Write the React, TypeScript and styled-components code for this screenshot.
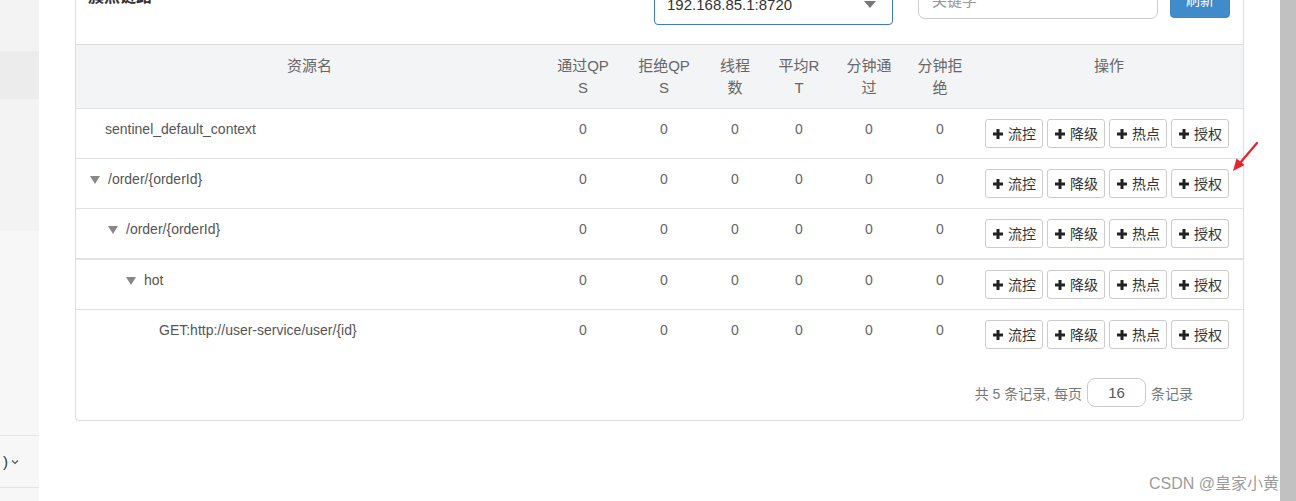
import React from 'react';
import styled, { createGlobalStyle } from 'styled-components';

const GlobalStyle = createGlobalStyle`
  html, body {
    margin: 0;
    padding: 0;
    background: #fff;
  }
  body {
    font-family: "Liberation Sans", "Noto Sans CJK SC", sans-serif;
    overflow: hidden;
  }
  * {
    box-sizing: border-box;
  }
`;

const Page = styled.div`
  position: relative;
  display: flex;
  width: 1296px;
  height: 501px;
  overflow: hidden;
`;

const Sidebar = styled.div`
  width: 39px;
  flex-shrink: 0;
  display: flex;
  flex-direction: column;
  background: #f7f7f7;
`;

const SubMenu = styled.div`
  height: 231px;
  display: flex;
  flex-direction: column;
  background: #f3f3f3;
`;

const MenuItem = styled.div<{ $h: number; $active?: boolean; $bordered?: boolean }>`
  height: ${(p) => p.$h}px;
  flex-shrink: 0;
  display: flex;
  align-items: center;
  background: ${(p) => (p.$active ? '#ececec' : 'transparent')};
  border-top: ${(p) => (p.$bordered ? '1px solid #e4e4e4' : 'none')};
  border-bottom: ${(p) => (p.$bordered ? '1px solid #e4e4e4' : 'none')};
`;

const MenuLabel = styled.span`
  display: flex;
  align-items: center;
  gap: 3px;
  padding-left: 3px;
  font-size: 15px;
  color: #333;
`;

const Main = styled.div`
  flex: 1;
  padding: 0 36px;
`;

const Card = styled.div`
  margin-top: -30px;
  border: 1px solid #ddd;
  border-radius: 4px;
  background: #fff;
`;

const Toolbar = styled.div`
  display: flex;
  align-items: flex-start;
  height: 74px;
  padding: 0 13px 0 12px;
  border-bottom: 1px solid #ddd;
`;

const Title = styled.div`
  flex: 1;
  margin-top: 15px;
  font-size: 16px;
  line-height: 22px;
  font-weight: bold;
  color: #333;
`;

const Select = styled.div`
  width: 239px;
  height: 42px;
  margin-top: 12px;
  margin-right: 25px;
  padding: 0 16px 0 12px;
  display: flex;
  align-items: center;
  justify-content: space-between;
  border: 1px solid #3d7cbd;
  border-radius: 4px;
  font-size: 15px;
  color: #333;
`;

const Caret = styled.span`
  width: 0;
  height: 0;
  border-left: 6px solid transparent;
  border-right: 6px solid transparent;
  border-top: 7px solid #777;
`;

const SearchInput = styled.input`
  width: 240px;
  height: 38px;
  margin-top: 10px;
  margin-right: 12px;
  padding: 0 13px;
  border: 1px solid #ccc;
  border-radius: 7px;
  font-family: inherit;
  font-size: 15px;
  color: #555;
  outline: none;

  &::placeholder {
    color: #999;
  }
`;

const RefreshButton = styled.button`
  width: 60px;
  height: 38px;
  margin-top: 9px;
  border: 1px solid #3f86c4;
  border-radius: 4px;
  background: #428bca;
  color: #fff;
  font-family: inherit;
  font-size: 14px;
`;

const Table = styled.table`
  width: 1167px;
  border-collapse: collapse;
  table-layout: fixed;
`;

const Th = styled.th`
  padding: 10px 4px 9px;
  background: #f3f4f5;
  color: #666;
  font-size: 15px;
  font-weight: normal;
  line-height: 22px;
  text-align: center;
  vertical-align: top;
  white-space: pre-line;
`;

const Td = styled.td<{ $thick?: boolean }>`
  padding: 10px 8px;
  border-top: ${(p) => (p.$thick ? 2 : 1)}px solid #e2e2e2;
  color: #666;
  font-size: 14px;
  line-height: 20px;
  text-align: center;
  vertical-align: top;
`;

const NameCell = styled(Td)<{ $indent: number }>`
  padding-left: ${(p) => p.$indent}px;
  text-align: left;
  color: #555;
`;

const Toggle = styled.span`
  display: inline-block;
  width: 0;
  height: 0;
  margin-right: 8px;
  vertical-align: middle;
  border-left: 5.5px solid transparent;
  border-right: 5.5px solid transparent;
  border-top: 8px solid #888;
`;

const OpGroup = styled.div`
  display: inline-flex;
  gap: 4px;
  margin-left: -4px;
`;

const OpButton = styled.button`
  height: 29px;
  padding: 0 6px 0 7px;
  display: inline-flex;
  align-items: center;
  gap: 5px;
  border: 1px solid #ccc;
  border-radius: 3px;
  background: #fff;
  color: #333;
  font-family: inherit;
  font-size: 14px;
  line-height: 1;
`;

const Pagination = styled.div`
  display: flex;
  justify-content: flex-end;
  align-items: center;
  padding: 19px 50px 13px 0;
  font-size: 14px;
  color: #777;
`;

const PageSize = styled.input`
  width: 59px;
  height: 29px;
  margin: 0 5px;
  border: 1px solid #ccc;
  border-radius: 8px;
  text-align: center;
  font-family: inherit;
  font-size: 15px;
  color: #555;
  outline: none;
`;

const Scrollbar = styled.div`
  width: 16px;
  flex-shrink: 0;
  background: #c1c1c1;
`;

const Watermark = styled.div`
  position: absolute;
  right: 17px;
  bottom: 7px;
  font-size: 16px;
  color: rgba(120, 120, 120, 0.75);
`;

const Annotation = styled.svg`
  position: absolute;
  left: 1228px;
  top: 138px;
`;

const PlusIcon = () => (
  <svg width="10" height="10" viewBox="0 0 10 10">
    <path d="M5 0v10M0 5h10" stroke="#222" strokeWidth="3" />
  </svg>
);

const ChevronDown = () => (
  <svg width="8" height="6" viewBox="0 0 8 6">
    <path d="M1 1.5l3 3 3-3" stroke="#555" strokeWidth="1.2" fill="none" />
  </svg>
);

const columns = [
  { label: '资源名', width: 467 },
  { label: '通过QP\nS', width: 80 },
  { label: '拒绝QP\nS', width: 82 },
  { label: '线程\n数', width: 60 },
  { label: '平均R\nT', width: 68 },
  { label: '分钟通\n过', width: 72 },
  { label: '分钟拒\n绝', width: 70 },
  { label: '操作', width: 268 },
];

type Resource = { name: string; level: number; node: boolean; thick?: boolean };

const resources: Resource[] = [
  { name: 'sentinel_default_context', level: 0, node: false },
  { name: '/order/{orderId}', level: 0, node: true },
  { name: '/order/{orderId}', level: 1, node: true },
  { name: 'hot', level: 2, node: true, thick: true },
  { name: 'GET:http://user-service/user/{id}', level: 3, node: false },
];

const actions = ['流控', '降级', '热点', '授权'];

function App() {
  return (
    <Page>
      <GlobalStyle />
      <Sidebar>
        <SubMenu>
          <MenuItem $h={51} />
          <MenuItem $h={48} $active />
        </SubMenu>
        <MenuItem $h={204} />
        <MenuItem $h={53} $bordered>
          <MenuLabel>
            )
            <ChevronDown />
          </MenuLabel>
        </MenuItem>
      </Sidebar>

      <Main>
        <Card>
          <Toolbar>
            <Title>簇点链路</Title>
            <Select>
              <span>192.168.85.1:8720</span>
              <Caret />
            </Select>
            <SearchInput placeholder="关键字" />
            <RefreshButton>刷新</RefreshButton>
          </Toolbar>

          <Table>
            <colgroup>
              {columns.map((c, i) => (
                <col key={i} style={{ width: c.width }} />
              ))}
            </colgroup>
            <thead>
              <tr>
                {columns.map((c, i) => (
                  <Th key={i}>{c.label}</Th>
                ))}
              </tr>
            </thead>
            <tbody>
              {resources.map((r, i) => (
                <tr key={i}>
                  <NameCell
                    $thick={r.thick}
                    $indent={(r.node ? 14 : 29) + r.level * 18}
                  >
                    {r.node && <Toggle />}
                    {r.name}
                  </NameCell>
                  {[0, 1, 2, 3, 4, 5].map((k) => (
                    <Td key={k} $thick={r.thick}>
                      0
                    </Td>
                  ))}
                  <Td $thick={r.thick}>
                    <OpGroup>
                      {actions.map((a) => (
                        <OpButton key={a}>
                          <PlusIcon />
                          {a}
                        </OpButton>
                      ))}
                    </OpGroup>
                  </Td>
                </tr>
              ))}
            </tbody>
          </Table>

          <Pagination>
            共 5 条记录, 每页
            <PageSize defaultValue="16" />
            条记录
          </Pagination>
        </Card>
      </Main>

      <Scrollbar />

      <Annotation width="32" height="36" viewBox="0 0 32 36">
        <path d="M29 5L12 25" stroke="#e8232a" strokeWidth="2.2" strokeLinecap="round" />
        <path d="M5 33L8.5 20.5L16.5 27Z" fill="#e8232a" />
      </Annotation>

      <Watermark>CSDN @皇家小黄</Watermark>
    </Page>
  );
}

export default App;
